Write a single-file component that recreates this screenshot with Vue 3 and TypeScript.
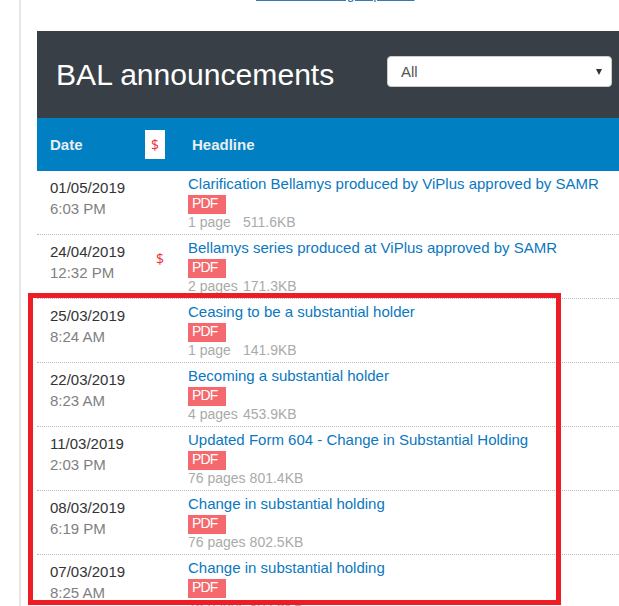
<script setup lang="ts">
interface Row {
  date: string
  time: string
  price?: boolean
  title: string
  pages: string
  size: string
}

const rows: Row[] = [
  { date: '01/05/2019', time: '6:03 PM', title: 'Clarification Bellamys produced by ViPlus approved by SAMR', pages: '1 page', size: '511.6KB' },
  { date: '24/04/2019', time: '12:32 PM', price: true, title: 'Bellamys series produced at ViPlus approved by SAMR', pages: '2 pages', size: '171.3KB' },
  { date: '25/03/2019', time: '8:24 AM', title: 'Ceasing to be a substantial holder', pages: '1 page', size: '141.9KB' },
  { date: '22/03/2019', time: '8:23 AM', title: 'Becoming a substantial holder', pages: '4 pages', size: '453.9KB' },
  { date: '11/03/2019', time: '2:03 PM', title: 'Updated Form 604 - Change in Substantial Holding', pages: '76 pages', size: '801.4KB' },
  { date: '08/03/2019', time: '6:19 PM', title: 'Change in substantial holding', pages: '76 pages', size: '802.5KB' },
  { date: '07/03/2019', time: '8:25 AM', title: 'Change in substantial holding', pages: '76 pages', size: '802.5KB' }
]
</script>

<template>
  <div class="page">
    <div class="rail"></div>
    <a class="top-link">View more filing in pdf file</a>
    <section class="panel">
      <header class="hero">
        <h1>BAL announcements</h1>
        <div class="select"><span>All</span><i class="caret"></i></div>
      </header>
      <div class="head">
        <span class="h-date">Date</span>
        <span class="h-price"><b>$</b></span>
        <span class="h-title">Headline</span>
      </div>
      <article v-for="r in rows" :key="r.date" class="row">
        <div class="when">
          <div class="date">{{ r.date }}</div>
          <div class="time">{{ r.time }}</div>
        </div>
        <div class="flag"><span v-if="r.price">$</span></div>
        <div class="info">
          <a class="title">{{ r.title }}</a>
          <span class="pdf">PDF</span>
          <div class="meta"><span class="pages">{{ r.pages }}</span>{{ r.size }}</div>
        </div>
      </article>
    </section>
    <div class="highlight"></div>
  </div>
</template>

<style>
html, body { margin: 0; background: #fff; overflow: hidden; }
</style>

<style scoped>
.page {
  position: relative;
  width: 619px;
  height: 606px;
  overflow: hidden;
  font-family: "Liberation Sans", Arial, sans-serif;
  background: #fff;
}
.rail {
  position: absolute;
  left: 19px;
  top: 0;
  bottom: 0;
  width: 2px;
  background: #e7e7e7;
}
.top-link {
  position: absolute;
  left: 256px;
  top: -14px;
  font-size: 14px;
  line-height: 16px;
  color: #337ab7;
  text-decoration: underline;
  white-space: nowrap;
}
.panel {
  position: absolute;
  left: 37px;
  top: 31px;
  width: 600px;
}
.hero {
  height: 87px;
  background: #393f47;
  display: flex;
  align-items: flex-start;
  padding-left: 19px;
}
.hero h1 {
  margin: 27px 0 0;
  width: 331px;
  font-size: 30.1px;
  font-weight: 400;
  color: #fff;
  line-height: 34px;
  white-space: nowrap;
}
.select {
  width: 225px;
  height: 31px;
  margin-top: 25px;
  box-sizing: border-box;
  border: 1px solid #ccc;
  border-radius: 4px;
  background: #fff;
  display: flex;
  align-items: center;
  justify-content: space-between;
  padding: 0 9px 0 13px;
  font-size: 15px;
  color: #555;
}
.caret {
  width: 0;
  height: 0;
  border-left: 3.5px solid transparent;
  border-right: 3.5px solid transparent;
  border-top: 6px solid #333;
}
.head {
  height: 53px;
  background: #0080c3;
  display: flex;
  align-items: center;
  font-size: 15px;
  font-weight: 700;
  color: #e8eef2;
}
.h-date { width: 108px; padding-left: 13px; box-sizing: border-box; }
.h-price {
  width: 20px;
  height: 29px;
  background: #fff;
  color: #e8343f;
  display: flex;
  align-items: center;
  justify-content: center;
  font-family: "Open Sans", sans-serif;
}
.h-price b { font-weight: 400; font-size: 14px; }
.h-title { margin-left: 27px; }
.row {
  height: 63px;
  border-bottom: 1px dotted #bbb;
  display: flex;
}
.when { width: 108px; padding: 6px 0 0 13px; box-sizing: border-box; }
.date { font-size: 15px; line-height: 21px; color: #333; }
.time { font-size: 15px; line-height: 21px; color: #808080; }
.flag {
  width: 20px;
  padding-top: 15px;
  padding-left: 10px;
  box-sizing: border-box;
  text-align: center;
  color: #e8343f;
  font-family: "Open Sans", sans-serif;
  font-size: 14px;
  line-height: 18px;
}
.info { margin-left: 23px; padding-top: 4px; white-space: nowrap; }
.title { display: block; font-size: 15px; line-height: 18px; color: #0a78c0; }
.pdf {
  display: block;
  width: 38px;
  height: 19px;
  margin-top: 2px;
  padding-left: 4px;
  box-sizing: border-box;
  background: #f4686e;
  color: #fff;
  font-size: 14px;
  letter-spacing: -0.8px;
  line-height: 17px;
}
.meta { font-size: 14px; line-height: 17px; color: #aaa; }
.pages { display: inline-block; min-width: 51px; padding-right: 4px; }
.highlight {
  position: absolute;
  left: 28px;
  top: 293px;
  width: 533px;
  height: 312px;
  box-sizing: border-box;
  border: 5px solid #ee1c25;
}
</style>
